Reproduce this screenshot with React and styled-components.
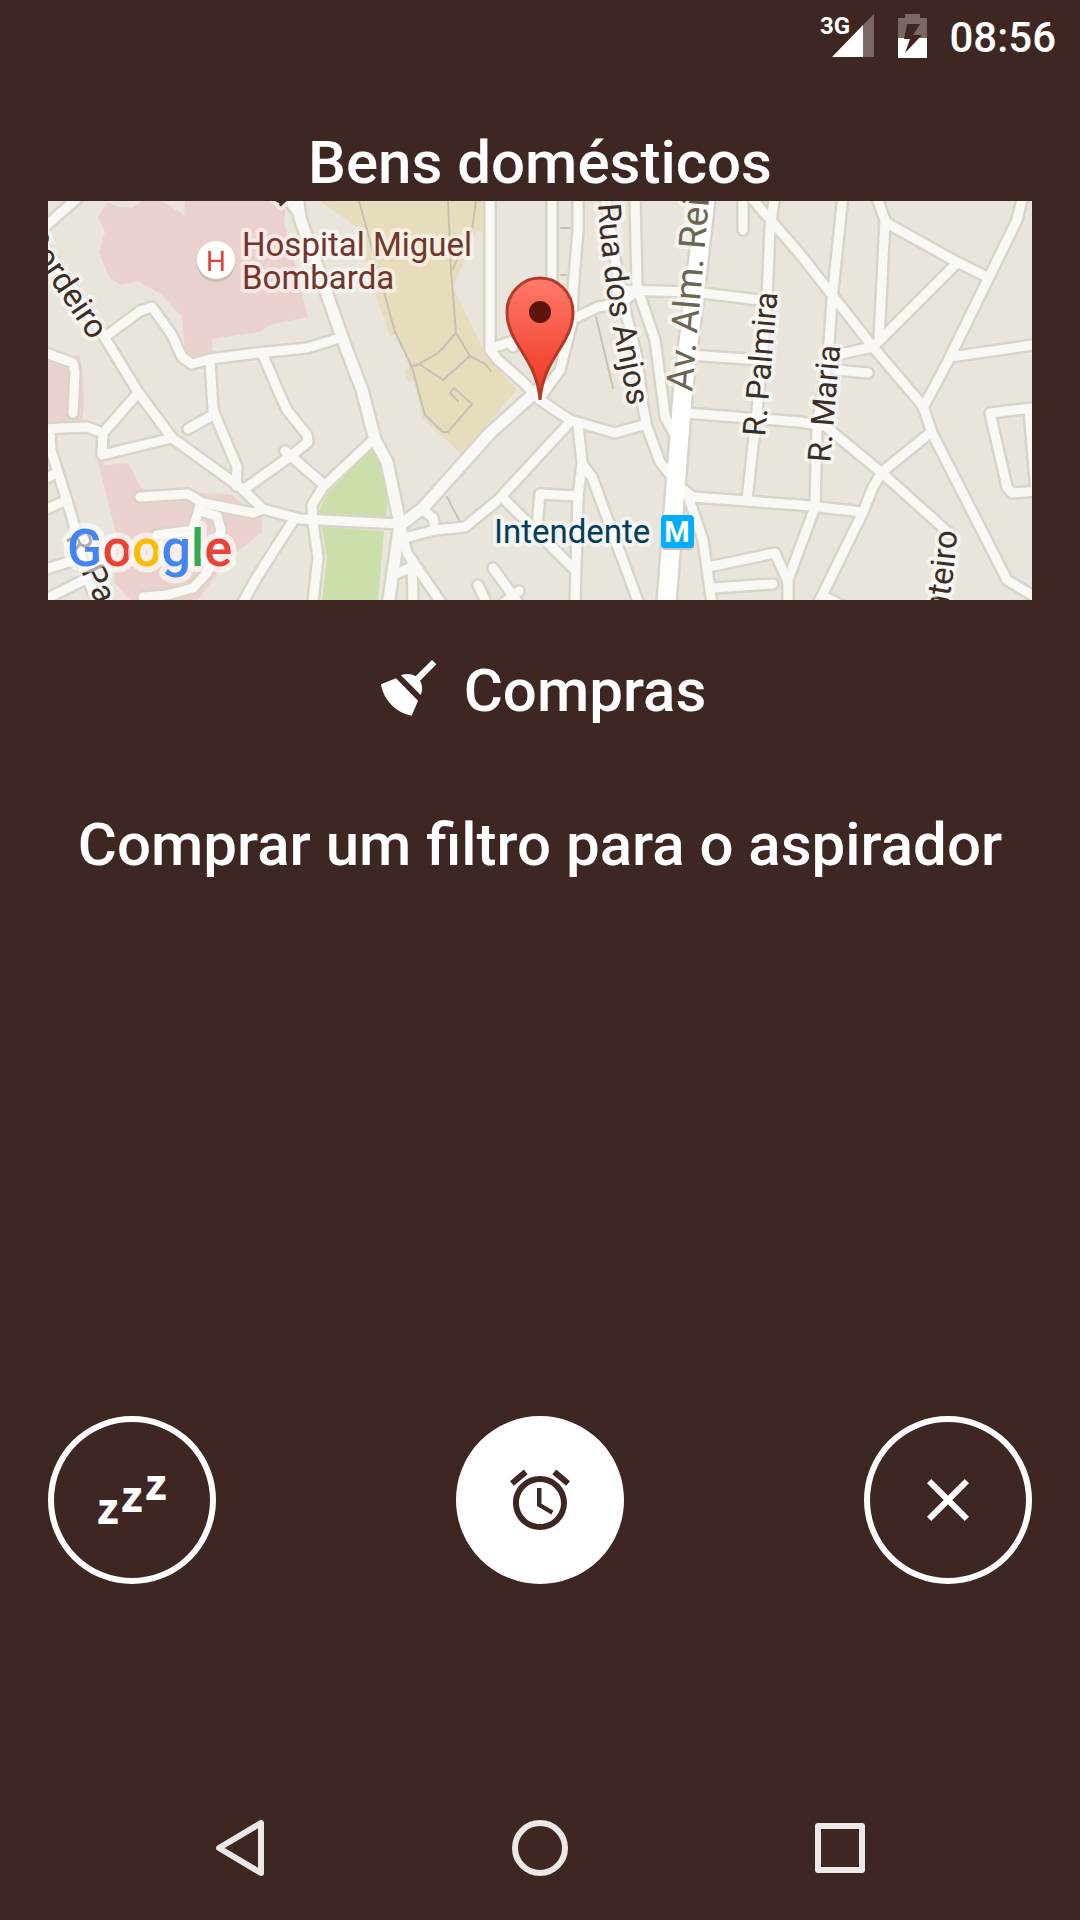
import React from "react";
import styled, { createGlobalStyle } from "styled-components";
import { MdAlarm, MdClose } from "react-icons/md";

const areas = [
  // hospital grounds
  {
    color: "#ebd1cd",
    d: "M108 202L98 217L105 232L99 253L110 278L121 285L138 281L162 295L182 317L185 350L188 362L213 356L212 339L260 332L270 325L308 317L296 270L284 222L286 201H185L184 215L162 201H142L132 208L118 207Z",
  },
  { color: "#ebd1cd", d: "M48 355L80 356L83 380L84 408L82 420L48 422Z" },
  {
    color: "#ebd1cd",
    d: "M97 458L106 465L128 463L142 489L200 493L232 495L262 520L262 532L227 560L198 600H130L114 582L116 533Z",
  },
  // school
  {
    color: "#e7dcbb",
    d: "M320 201L357 227L366 262L375 293L390 336L396 334L410 367L405 370L408 381L413 380L423 418L461 454L517 390L487 357L453 287L477 230L483 233V201Z",
  },
  // gardens
  { color: "#cadfaa", d: "M373 449L383 465L389 493L386 517L318 514L327 493Z" },
  { color: "#cadfaa", d: "M322 527L384 531L378 600H322L327 557Z" },
];

const paths = [
  "M359 201L395 332L412 367L425 415L443 432H448L472 404L454 388L450 393L458 401",
  "M448 201L451 270L456 333L438 353L419 364L411 367",
  "M419 364L443 380L470 356L456 333",
  "M470 356L485 364L491 371",
  "M476 201L472 230L452 270",
  "M447 497L459 520",
  "M596 317L613 388",
  "M561 228H570M561 275H566",
];

const streets = [
  "M40 231L80 196",
  "M40 240L105 338L138 392L172 438L240 487L263 509L300 519L400 524",
  "M105 337L140 311L152 307L172 335L182 357L192 364L210 359L257 353L307 348L343 337",
  "M210 360L213 410L215 415L237 467L236 486",
  "M188 429L213 415",
  "M262 353L280 395L287 410L307 435L308 442L292 455",
  "M243 490L292 455",
  "M285 451L323 484",
  "M373 440L323 487L312 505L313 523L318 557L313 602",
  "M287 198L299 214",
  "M490 195V350L498 360L523 382L538 398",
  "M495 347L510 342L513 347",
  "M540 400L570 420L615 433L643 425",
  "M552 195V290",
  "M578 195V230L573 290L572 323L560 370L540 398",
  "M575 318L598 307L622 303L637 290",
  "M617 290L693 292L760 300",
  "M605 195L620 290L637 357L643 407L647 427L660 462L672 477",
  "M635 195L637 287L655 340L663 400L665 417L676 437",
  "M743 195V230",
  "M775 195L770 227L767 300L757 410L747 500",
  "M749 195L800 254L873 347L923 406L932 433L1007 580L1040 600",
  "M843 195L832 300L828 357L817 427L815 507L788 580V605",
  "M690 355L760 360",
  "M686 413L800 422L825 426L882 473L950 534",
  "M684 490L693 497L800 505L863 512L873 487L882 472L930 433",
  "M863 512L818 604",
  "M823 596L843 606",
  "M688 496L703 540L712 604",
  "M708 567L775 553L788 582",
  "M713 588L773 584",
  "M876 195L885 220L879 340",
  "M885 222L953 260L987 277",
  "M957 263L893 327L873 347",
  "M1023 195L1017 220L947 363L923 408",
  "M950 357L1040 344",
  "M836 355L873 347",
  "M837 370L868 373",
  "M1040 407L990 413L1007 487L1012 493L1040 491",
  "M1029 410L1036 492",
  "M578 425L582 463L578 497L575 604",
  "M583 465L592 477L639 604",
  "M578 496L540 494L537 525",
  "M503 498L573 568",
  "M570 422L498 500L465 527L435 530L405 538",
  "M423 510L433 518L435 530",
  "M400 523L407 553L442 604",
  "M412 560L413 604",
  "M393 575L412 567",
  "M493 568L519 604",
  "M478 585L487 604",
  "M519 591L500 606",
  "M293 521L257 577L242 604",
  "M40 429L87 427L103 433L138 393",
  "M103 433L102 455L172 438",
  "M50 430L51 450L72 517L84 570L100 610",
  "M40 351L73 363L75 372L73 413",
  "M40 481L57 473",
  "M40 512L67 500",
  "M40 571L78 559",
  "M40 602L84 580",
  "M140 497L188 494L203 503L253 513L263 509",
  "M200 505L193 530L157 535",
  "M203 512L217 516L221 530L207 573L193 588L167 595L143 597",
];

const mainStreets = [
  "M297 195L300 218L315 260L343 340L362 390L375 440L387 462L395 500L400 524L388 606",
  "M402 524L423 508L490 433L538 390",
];

function CityMap() {
  return (
    <MapSvg viewBox="48 201 984 399" role="img" aria-label="Mapa">
      <defs>
        <linearGradient id="pin" x1="0" y1="0" x2="0" y2="1">
          <stop offset="0" stopColor="#ff7a6b" />
          <stop offset="1" stopColor="#ee3420" />
        </linearGradient>
      </defs>
      <rect x="48" y="201" width="984" height="399" fill="#e9e5dd" />
      {areas.map((area) => (
        <path key={area.d} d={area.d} fill={area.color} />
      ))}
      {paths.map((d) => (
        <Line key={d} d={d} stroke="#c5c1b6" strokeWidth="2" />
      ))}

      {/* casings first, so that the crossings stay open */}
      {streets.map((d) => (
        <Line key={d} d={d} stroke="#d9d4c9" strokeWidth="14" />
      ))}
      {mainStreets.map((d) => (
        <Line key={d} d={d} stroke="#d9d4c9" strokeWidth="16" />
      ))}
      <Line d="M706 195L683 390L666 610" stroke="#d9d4c9" strokeWidth="23" />
      {streets.map((d) => (
        <Line key={d} d={d} stroke="#f9f8f4" strokeWidth="9" />
      ))}
      {mainStreets.map((d) => (
        <Line key={d} d={d} stroke="#f9f8f4" strokeWidth="11" />
      ))}
      <Line d="M706 195L683 390L666 610" stroke="#ffffff" strokeWidth="18" />

      <path id="anjos" d="M598 204C600 240 605 275 608 300C613 335 624 375 629 415" fill="none" />
      <path id="monteiro" d="M924 686L947 608C951 591 955 566 957 531" fill="none" />
      <Label>
        <textPath href="#anjos">Rua dos Anjos</textPath>
      </Label>
      <Label $size={33} textAnchor="end">
        <textPath href="#monteiro" startOffset="100%">
          Monteiro
        </textPath>
      </Label>
      <Label $size={33} textAnchor="end" transform="translate(91 341) rotate(56)">
        Cordeiro
      </Label>
      <Label $size={33} transform="translate(65 537) rotate(65)">
        R. Pa
      </Label>
      <Label transform="translate(765 437) rotate(-85)">R. Palmira</Label>
      <Label transform="translate(830 463) rotate(-85)">R. Maria</Label>
      <Label $size={37} $color="#6b6654" transform="translate(692 392) rotate(-85)">
        Av. Alm. Reis
      </Label>
      <Label textAnchor="end" transform="translate(282 208) rotate(50)">
        a
      </Label>

      <circle cx="216" cy="263" r="19" fill="#c6bfb3" />
      <circle cx="216" cy="260" r="19" fill="#ffffff" />
      <Label $size={28} $color="#db4437" $plain textAnchor="middle" x="216" y="271">
        H
      </Label>
      <Label $size={33} $color="#73352b" x="242" y="256">
        Hospital Miguel
      </Label>
      <Label $size={33} $color="#73352b" x="242" y="289">
        Bombarda
      </Label>

      <Label $size={33} $color="#003f5c" x="494" y="543">
        Intendente
      </Label>
      <rect x="661" y="517" width="33" height="33" rx="4" fill="#c6c4c0" />
      <rect x="661" y="515" width="33" height="33" rx="4" fill="#00aeff" />
      <Label $size={29} $weight={700} $color="#ffffff" $plain textAnchor="middle" x="677" y="542">
        M
      </Label>

      <path
        d="M540 400C537 358 507 344 507 312A33 34 0 0 1 573 312C573 344 543 358 540 400Z"
        fill="url(#pin)"
        stroke="#b33a2b"
        strokeWidth="3"
      />
      <circle cx="540" cy="312" r="11" fill="#5b140e" />

      <Brand x="67" y="566">
        <tspan fill="#4285f4">G</tspan>
        <tspan fill="#ea4335">o</tspan>
        <tspan fill="#fbbc05">o</tspan>
        <tspan fill="#4285f4">g</tspan>
        <tspan fill="#34a853">l</tspan>
        <tspan fill="#ea4335">e</tspan>
      </Brand>
    </MapSvg>
  );
}

function App() {
  return (
    <Screen>
      <GlobalStyle />
      <StatusBar>
        <svg width="56" height="48" viewBox="0 0 56 48" aria-hidden="true">
          <path d="M43 13L54 2V45H43Z" fill="#7a6865" />
          <path d="M12 45L43 13V45Z" fill="#ffffff" />
          <Network x="0" y="22">
            3G
          </Network>
        </svg>
        <svg width="29" height="48" viewBox="0 0 29 48" aria-hidden="true">
          <path d="M7 2H22V6H29V26H0V6H7Z" fill="#7a6865" />
          <path d="M0 26H29V46H0Z" fill="#ffffff" />
          <path d="M9 12H22L15 23H24L7 41L12 27H6Z" fill="#3e2723" />
        </svg>
        <Clock>08:56</Clock>
      </StatusBar>

      <Content>
        <Title>Bens domésticos</Title>
        <CityMap />
        <Category>
          <svg width="72" height="72" viewBox="0 0 216 216" fill="#ffffff" aria-hidden="true">
            <path d="M21 88L66 70L132 137L113 182C68 176 28 135 21 88Z" />
            <path d="M81 61C96 55 112 56 125 64L174 15L187 28L138 77C146 90 146 106 140 120Z" />
          </svg>
          <CategoryName>Compras</CategoryName>
        </Category>
        <Task>Comprar um filtro para o aspirador</Task>

        <Actions>
          <RoundButton aria-label="Adiar">
            <svg width="72" height="72" viewBox="0 0 72 72" aria-hidden="true">
              <Snore x="12" y="59">
                Z
              </Snore>
              <Snore x="36" y="47">
                Z
              </Snore>
              <Snore x="60" y="35">
                Z
              </Snore>
            </svg>
          </RoundButton>
          <RoundButton $filled aria-label="Alarme">
            <MdAlarm size={72} />
          </RoundButton>
          <RoundButton aria-label="Fechar">
            <MdClose size={72} />
          </RoundButton>
        </Actions>
      </Content>

      <NavBar>
        <NavButton aria-label="Voltar">
          <NavIcon viewBox="0 0 72 72">
            <path d="M15 36L57 11V61Z" />
          </NavIcon>
        </NavButton>
        <NavButton aria-label="Início">
          <NavIcon viewBox="0 0 72 72">
            <circle cx="36" cy="36" r="25" />
          </NavIcon>
        </NavButton>
        <NavButton aria-label="Recentes">
          <NavIcon viewBox="0 0 72 72">
            <rect x="14" y="14" width="44" height="44" />
          </NavIcon>
        </NavButton>
      </NavBar>
    </Screen>
  );
}

export default App;

const GlobalStyle = createGlobalStyle`
  * {
    box-sizing: border-box;
  }

  body {
    margin: 0;
    background-color: #3e2723;
    font-family: Roboto, "Liberation Sans", sans-serif;
  }
`;

const Screen = styled.div`
  display: flex;
  flex-direction: column;
  min-height: 100vh;
  color: white;
  background-color: #3e2723;
`;

const StatusBar = styled.header`
  display: flex;
  align-items: center;
  justify-content: flex-end;
  gap: 22px;
  height: 72px;
  padding: 0 24px;
`;

const Network = styled.text`
  font-size: 24px;
  font-weight: 700;
  fill: white;
`;

const Clock = styled.time`
  padding-top: 2px;
  font-size: 42px;
  font-weight: 500;
`;

const Content = styled.main`
  flex: 1;
  display: flex;
  flex-direction: column;
  padding: 56px 48px 192px;
`;

const Title = styled.h1`
  margin: 0 0 3px;
  font-size: 60px;
  font-weight: 500;
  line-height: 70px;
  text-align: center;
`;

const MapSvg = styled.svg`
  display: block;
  width: 100%;
  height: auto;
`;

const Line = styled.path`
  fill: none;
  stroke-linecap: round;
  stroke-linejoin: round;
`;

const Label = styled.text`
  font-size: ${(props) => props.$size || 32}px;
  font-weight: ${(props) => props.$weight || 400};
  fill: ${(props) => props.$color || "#3a2e26"};
  stroke: ${(props) => (props.$plain ? "none" : "rgba(255, 255, 255, 0.5)")};
  stroke-width: 8px;
  stroke-linejoin: round;
  paint-order: stroke;
`;

const Brand = styled.text`
  font-size: 52px;
  font-weight: 500;
  stroke: rgba(255, 255, 255, 0.6);
  stroke-width: 12px;
  stroke-linejoin: round;
  paint-order: stroke;
`;

const Category = styled.div`
  display: flex;
  align-items: center;
  justify-content: center;
  gap: 18px;
  margin-top: 55px;
`;

const CategoryName = styled.h2`
  margin: 0;
  font-size: 60px;
  font-weight: 500;
  line-height: 70px;
`;

const Task = styled.p`
  margin: 83px 0 0;
  font-size: 60px;
  font-weight: 500;
  line-height: 70px;
  text-align: center;
`;

const Actions = styled.div`
  display: flex;
  justify-content: space-between;
  margin-top: auto;
`;

const RoundButton = styled.button`
  display: flex;
  align-items: center;
  justify-content: center;
  width: 168px;
  height: 168px;
  padding: 0;
  border: 6px solid white;
  border-radius: 50%;
  color: ${(props) => (props.$filled ? "#3e2723" : "white")};
  background-color: ${(props) => (props.$filled ? "white" : "transparent")};
  cursor: pointer;
`;

const Snore = styled.text`
  font-size: 31px;
  font-weight: 700;
  text-anchor: middle;
  fill: white;
  stroke: white;
  stroke-width: 2px;
`;

const NavBar = styled.nav`
  display: flex;
  height: 144px;
  padding: 0 90px;
`;

const NavButton = styled.button`
  flex: 1;
  display: flex;
  align-items: center;
  justify-content: center;
  padding: 0;
  border: none;
  background: none;
  cursor: pointer;
`;

const NavIcon = styled.svg`
  width: 72px;
  height: 72px;
  fill: none;
  stroke: #ebe9e8;
  stroke-width: 6px;
  stroke-linejoin: round;
`;
